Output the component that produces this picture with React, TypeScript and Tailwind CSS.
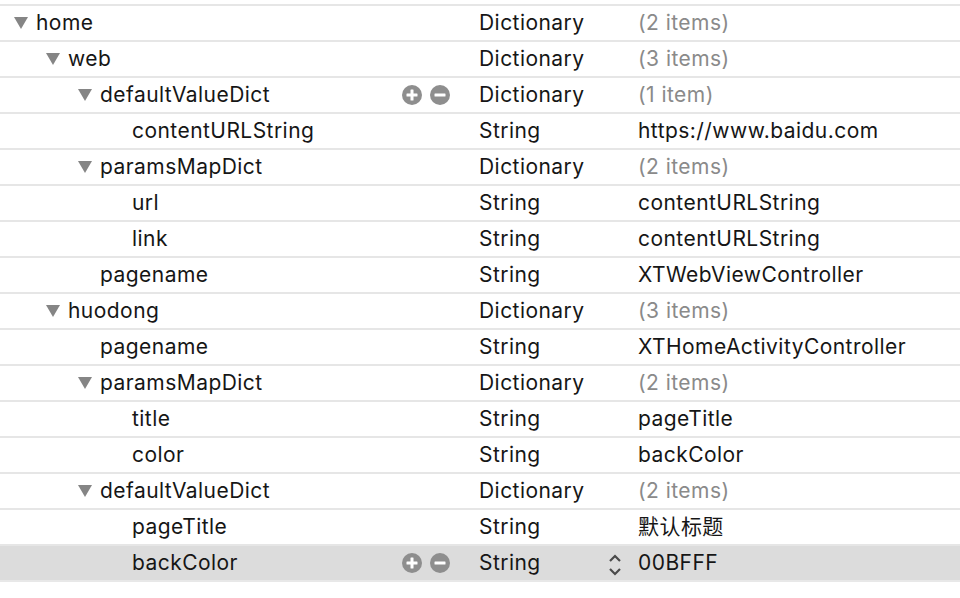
type Row = {
  level: number;
  key: string;
  type: string;
  value: string;
  expand?: boolean;
  buttons?: boolean;
  selected?: boolean;
};

const rows: Row[] = [
  { level: 0, key: "home", type: "Dictionary", value: "(2 items)", expand: true },
  { level: 1, key: "web", type: "Dictionary", value: "(3 items)", expand: true },
  { level: 2, key: "defaultValueDict", type: "Dictionary", value: "(1 item)", expand: true, buttons: true },
  { level: 3, key: "contentURLString", type: "String", value: "https://www.baidu.com" },
  { level: 2, key: "paramsMapDict", type: "Dictionary", value: "(2 items)", expand: true },
  { level: 3, key: "url", type: "String", value: "contentURLString" },
  { level: 3, key: "link", type: "String", value: "contentURLString" },
  { level: 2, key: "pagename", type: "String", value: "XTWebViewController" },
  { level: 1, key: "huodong", type: "Dictionary", value: "(3 items)", expand: true },
  { level: 2, key: "pagename", type: "String", value: "XTHomeActivityController" },
  { level: 2, key: "paramsMapDict", type: "Dictionary", value: "(2 items)", expand: true },
  { level: 3, key: "title", type: "String", value: "pageTitle" },
  { level: 3, key: "color", type: "String", value: "backColor" },
  { level: 2, key: "defaultValueDict", type: "Dictionary", value: "(2 items)", expand: true },
  { level: 3, key: "pageTitle", type: "String", value: "默认标题" },
  { level: 3, key: "backColor", type: "String", value: "00BFFF", buttons: true, selected: true },
];

function Disclosure() {
  return (
    <svg width="14" height="12" viewBox="0 0 14 12">
      <polygon points="0,0 14,0 7,12" fill="#858585" />
    </svg>
  );
}

function CircleBtn({ plus }: { plus?: boolean }) {
  return (
    <svg width="20" height="20" viewBox="0 0 20 20">
      <circle cx="10" cy="10" r="10" fill="#8e8e8e" />
      <rect x="4.5" y="8.5" width="11" height="3" rx="0.5" fill="#fff" />
      {plus && <rect x="8.5" y="4.5" width="3" height="11" rx="0.5" fill="#fff" />}
    </svg>
  );
}

function Stepper() {
  return (
    <svg width="14" height="26" viewBox="0 0 14 26">
      <polyline points="2,9 7,4 12,9" fill="none" stroke="#4a4a4a" strokeWidth="2.2" />
      <polyline points="2,17 7,22 12,17" fill="none" stroke="#4a4a4a" strokeWidth="2.2" />
    </svg>
  );
}

export default function App() {
  return (
    <div
      className="w-[960px] h-[598px] bg-white overflow-hidden pt-1 text-[21px] tracking-[0.45px] text-[#161616]"
      style={{ fontFamily: "Inter, 'Noto Sans CJK SC', sans-serif" }}
    >
      <div className="border-t-2 border-[#e6e6e6]">
        {rows.map((r, i) => (
          <div
            key={i}
            className={`grid grid-cols-[479px_159px_1fr] h-[36px] items-center border-b-2 ${
              r.selected ? "bg-[#dcdcdc] border-[#e8e8e8]" : "border-[#e6e6e6]"
            }`}
          >
            <div className="flex items-center h-full pr-[29px]" style={{ paddingLeft: 14 + r.level * 32 }}>
              <div className="w-[22px] flex items-center">{r.expand && <Disclosure />}</div>
              <span>{r.key}</span>
              {r.buttons && (
                <div className="ml-auto flex gap-2">
                  <CircleBtn plus />
                  <CircleBtn />
                </div>
              )}
            </div>
            <div className="flex items-center h-full pr-[16px]">
              <span>{r.type}</span>
              {r.selected && (
                <div className="ml-auto mt-[3px]">
                  <Stepper />
                </div>
              )}
            </div>
            <div className={r.value.startsWith("(") ? "text-[#8a8a8a]" : ""}>{r.value}</div>
          </div>
        ))}
      </div>
    </div>
  );
}
